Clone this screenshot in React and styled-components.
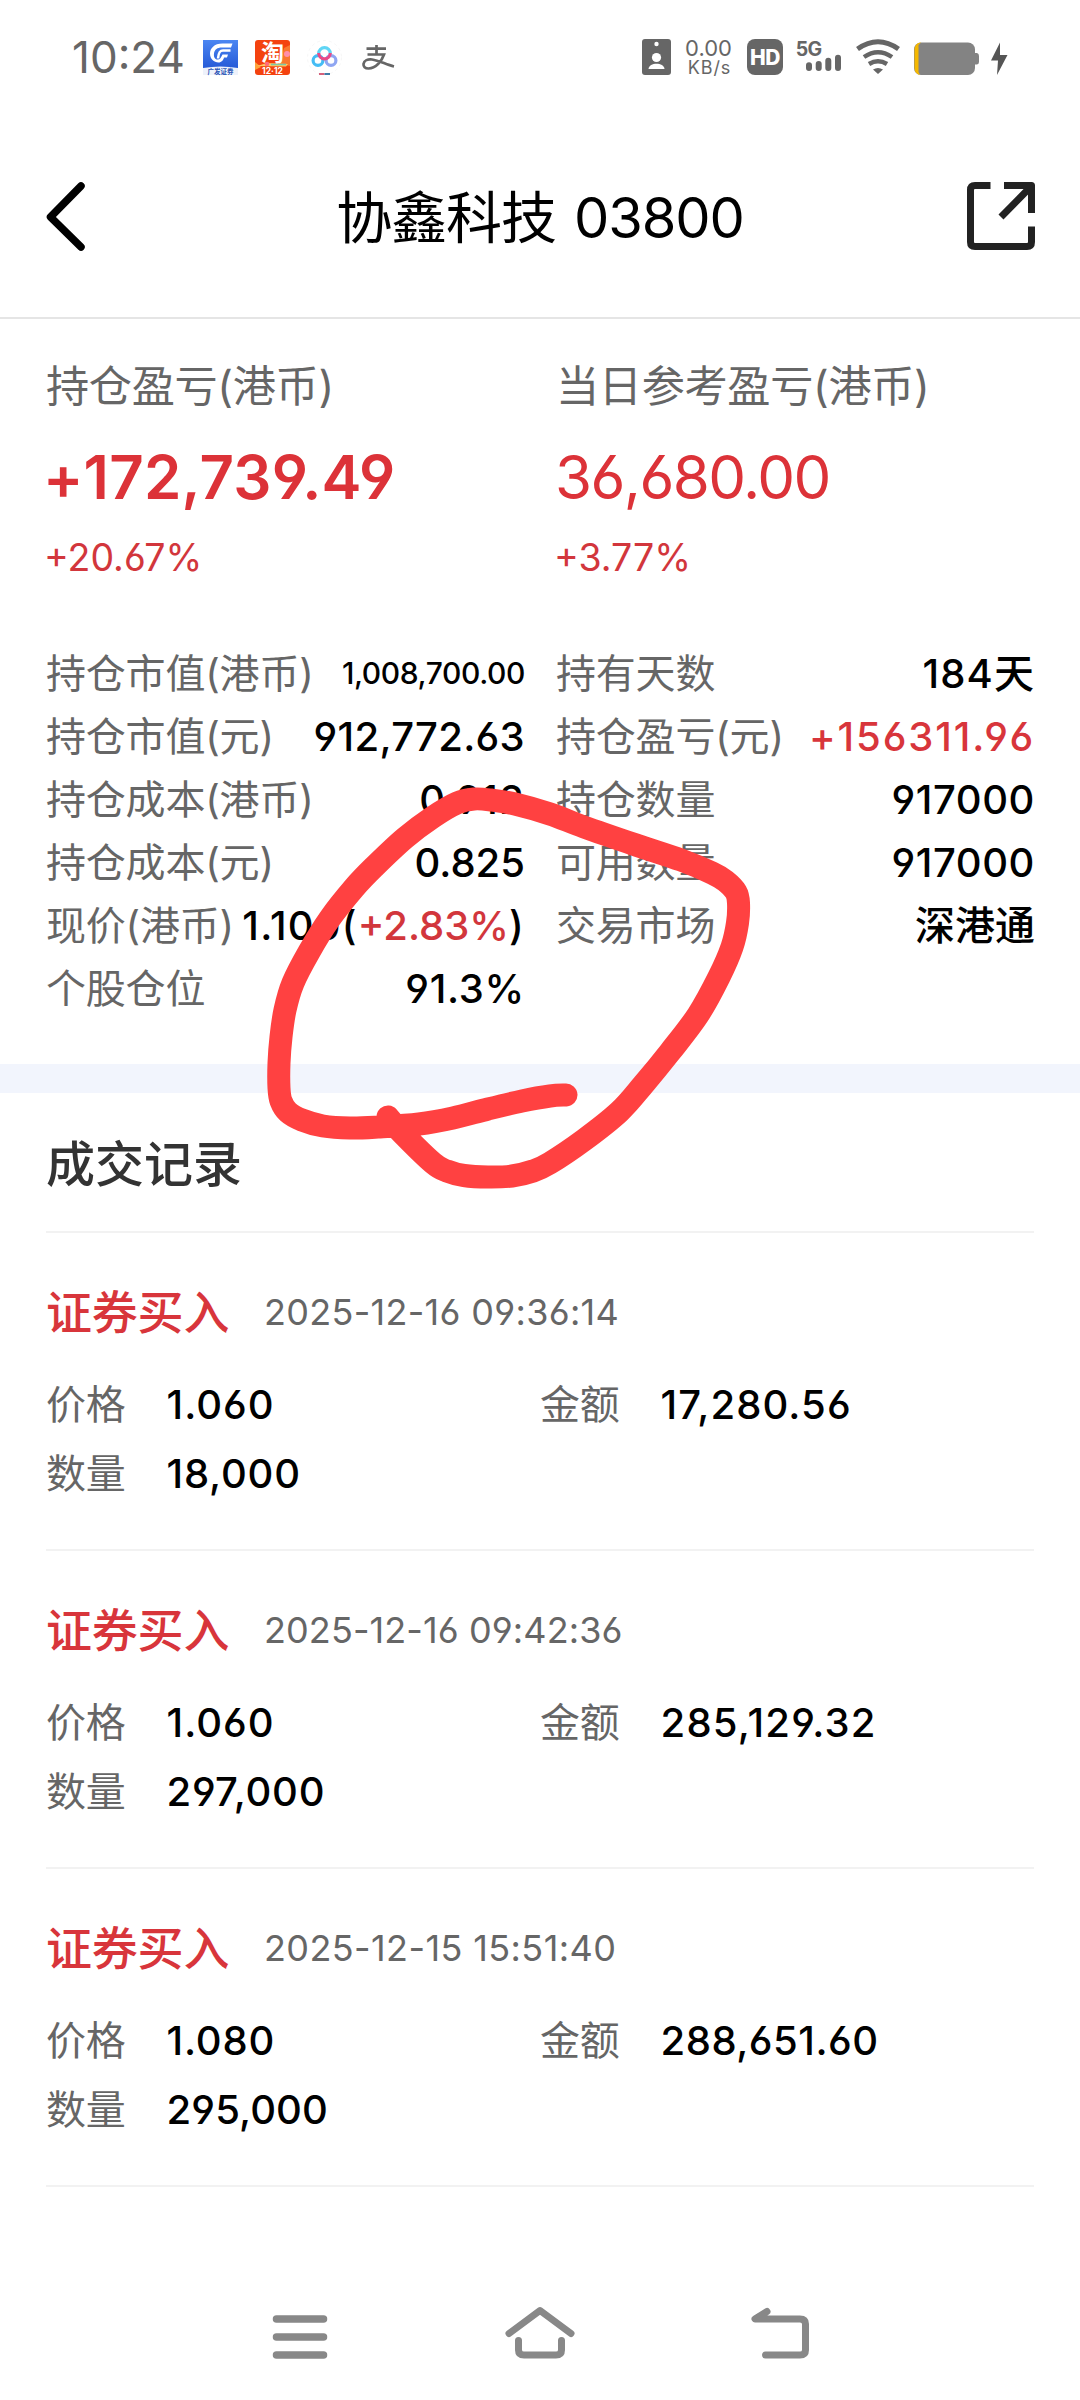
import styled, { createGlobalStyle } from "styled-components";

const holdings = [
  [
    { label: "持仓市值(港币)", value: "1,008,700.00", small: true, track: -0.4 },
    { label: "持仓市值(元)", value: "912,772.63", track: 0.3 },
    { label: "持仓成本(港币)", value: "0.912", track: 1.2 },
    { label: "持仓成本(元)", value: "0.825" },
    { label: "现价(港币)", value: "1.100", change: "+2.83%", track: 1.2 },
    { label: "个股仓位", value: "91.3%", track: 0.7 },
  ],
  [
    { label: "持有天数", value: "184天", track: 1.1 },
    { label: "持仓盈亏(元)", value: "+156311.96", up: true, track: 1.9 },
    { label: "持仓数量", value: "917000", track: 0.6 },
    { label: "可用数量", value: "917000", track: 0.6 },
    { label: "交易市场", value: "深港通" },
  ],
];

const records = [
  {
    time: { text: "2025-12-16 09:36:14", track: 0.3 },
    price: { text: "1.060", track: 1 },
    amount: { text: "17,280.56", track: 1.1 },
    count: { text: "18,000", track: 0.8 },
  },
  {
    time: { text: "2025-12-16 09:42:36", track: 0.1 },
    price: { text: "1.060", track: 1 },
    amount: { text: "285,129.32", track: 1.2 },
    count: { text: "297,000", track: 0.8 },
  },
  {
    time: { text: "2025-12-15 15:51:40", track: 0.4 },
    price: { text: "1.080", track: 0.8 },
    amount: { text: "288,651.60", track: 0.5 },
    count: { text: "295,000", track: 0.1 },
  },
];

// hand drawn marker stroke, in screen coordinates
const marker = [
  [388, 1117], [402, 1133], [433, 1163], [447, 1171], [464, 1175.5], [488, 1177],
  [512, 1176], [533, 1171], [550, 1163], [584, 1140], [619, 1112], [643, 1085],
  [670, 1052], [698, 1015], [719, 977], [732, 947], [737.5, 923], [738.5, 903],
  [736, 892], [725.5, 881], [712, 873], [681, 860], [636, 845], [584, 827],
  [550, 814], [515, 804], [491, 800], [474, 799], [457, 803], [433, 817],
  [405, 838], [374, 867], [354, 888], [329.5, 919], [309, 952], [293, 983],
  [285, 1010], [281, 1037], [279, 1063], [279, 1088], [281, 1101], [288, 1112],
  [302, 1120], [323, 1126], [350, 1128], [378, 1127], [419, 1124], [453, 1118],
  [488, 1109], [522, 1101], [550, 1096], [566, 1095],
];

const smooth = (pts) => {
  let d = `M${pts[0].join(" ")}`;
  for (let i = 0; i < pts.length - 1; i++) {
    const p0 = pts[i - 1] || pts[i];
    const p1 = pts[i];
    const p2 = pts[i + 1];
    const p3 = pts[i + 2] || p2;
    d += `C${p1[0] + (p2[0] - p0[0]) / 6} ${p1[1] + (p2[1] - p0[1]) / 6} ${
      p2[0] - (p3[0] - p1[0]) / 6
    } ${p2[1] - (p3[1] - p1[1]) / 6} ${p2[0]} ${p2[1]}`;
  }
  return d;
};

function AppIcons() {
  return (
    <AppIconRow>
      <svg width="35" height="35" viewBox="0 0 35 35">
        <defs>
          <linearGradient id="gf" x1="0" y1="0" x2="0" y2="1">
            <stop offset="0" stopColor="#4b86f2" />
            <stop offset="1" stopColor="#1c4fd0" />
          </linearGradient>
        </defs>
        <rect width="35" height="35" fill="url(#gf)" />
        <path d="M0 28Q17.500 25 35 28V35H0Z" fill="#eef2fb" />
        <path
          d="M19.500 3.500C11 3.500 7 8.500 7 13.500C7 19 11 22.500 15.500 22.500C18.500 22.500 20.500 20 21 17.500H24L25 14.500H19.500C18 17.500 17 19.500 14.500 19.500C12 19.500 10.500 17 11 13.500C11.500 9.500 14.500 7.500 18.500 7.500H28L29.500 3.500Z"
          fill="#fff"
        />
        <path d="M27.500 10.500H20C16.500 10.500 15.500 13 15 18.500" fill="none" stroke="#fff" strokeWidth="2.600" />
        <IconText x="17.500" y="33.500" size="6.500" fill="#2b55b5">广发证券</IconText>
      </svg>
      <svg width="35" height="35" viewBox="0 0 35 35">
        <rect width="35" height="35" rx="3" fill="#f4420f" />
        <path d="M35 5V26L24 24L29 8Z" fill="#f9772f" />
        <path d="M0 22L6 27L0 30Z" fill="#ffa23a" />
        <circle cx="32" cy="14" r="3" fill="#ff8fa8" />
        <path d="M2 26L12 23L33 24L31 26.500Z" fill="#ffc861" />
        <path d="M16 24.500H31" stroke="#7bc8a8" strokeWidth="1.500" />
        <circle cx="12" cy="24" r="2.300" fill="#ff6c7c" />
        <IconText x="17.500" y="21" size="23">淘</IconText>
        <IconText x="17.500" y="34" size="8.500">12·12</IconText>
      </svg>
      <svg width="35" height="35" viewBox="0 0 35 35">
        <circle cx="17.500" cy="17.500" r="17" fill="none" stroke="#f2f2f2" strokeWidth=".7" strokeDasharray="3 3" />
        <g fill="none" strokeWidth="3.200">
          <circle cx="11" cy="20.500" r="4.900" stroke="#45bdf5" />
          <circle cx="24" cy="20.500" r="4.900" stroke="#8fa6f2" />
          <path d="M11.700 13.500A5.800 5.800 0 0 1 23.300 13.500" stroke="#5fd5f5" />
          <path d="M11.700 13C12 20.700 23 20.700 23.300 13" stroke="#e94b88" />
        </g>
        <path d="M12 34H17.500" stroke="#d5607c" strokeWidth="2" />
        <path d="M17.500 34H23" stroke="#3e7da8" strokeWidth="2" />
      </svg>
      <svg width="35" height="35" viewBox="0 0 35 35">
        <path
          d="M7.500 8.700H27M17.500 5V14.500M8.500 14.500H25C23 20.500 17 28.500 9.500 28.500C6 28.500 4.300 26.500 4.500 24C5 20.500 9 19 13 19.500C20 20.500 27 24.500 35 26.500"
          fill="none"
          stroke="#666"
          strokeWidth="2.700"
        />
      </svg>
    </AppIconRow>
  );
}

function StatusBar() {
  return (
    <Status>
      <Clock>10:24</Clock>
      <AppIcons />
      <Indicators width="370" height="40" viewBox="640 37 370 40">
        <rect x="642" y="39" width="29" height="36" rx="3" fill="#666" />
        <circle cx="656.500" cy="44" r="2.200" fill="#fff" />
        <circle cx="656.500" cy="57.500" r="4.600" fill="#fff" />
        <path d="M648.500 69C649 62 664 62 664.500 69Z" fill="#fff" />
        <IconText x="708.500" y="56" size="22" weight="400" fill="#666">0.00</IconText>
        <IconText x="709.500" y="74" size="18" weight="400" fill="#666" spacing=".9px">KB/s</IconText>
        <rect x="747" y="39" width="36" height="36" rx="8" fill="#666" />
        <IconText x="765" y="65" size="21" weight="800" spacing="-.5px">HD</IconText>
        <IconText x="808.500" y="55.500" size="19.500" weight="700" fill="#666" spacing="-.8px">5G</IconText>
        <path d="M809 65.300V68M818.700 64V68M828.300 60.700V68M838 57.700V68" stroke="#666" strokeWidth="6" strokeLinecap="round" />
        <g fill="none" stroke="#666" strokeWidth="5">
          <path d="M857.500 49Q878 34.500 898.500 49" />
          <path d="M864 57Q878 47.500 892 57" strokeWidth="4.500" />
          <path d="M869 64Q878 58.500 887 64" strokeWidth="4.500" />
        </g>
        <path d="M873 69.500Q878 66.500 883 69.500L878 74Z" fill="#666" />
        <rect x="914" y="42.500" width="61" height="32.500" rx="7" fill="#838383" />
        <path d="M921 42.500H920A6 7 0 0 0 914.500 49.500V68A6 7 0 0 0 920 75L918.500 72V45Z" fill="#f5b800" />
        <path d="M975 53H977Q979 53.500 979 56V62Q979 64 977 64.500H975Z" fill="#838383" />
        <path d="M1000 42.500L991 60.500H998L997 75L1007.500 55H1000Z" fill="#555" />
      </Indicators>
    </Status>
  );
}

function Header() {
  return (
    <HeaderBar>
      <svg width="44" height="72" viewBox="44 180 44 72">
        <path d="M81 186L50.500 217L81 247" fill="none" stroke="#000" strokeWidth="7.500" strokeLinecap="round" strokeLinejoin="round" />
      </svg>
      <Title>协鑫科技 03800</Title>
      <svg width="72" height="72" viewBox="965 180 72 72">
        <path
          d="M990.500 185.500H975Q970.500 185.500 970.500 190V242Q970.500 246.500 975 246.500H1027Q1031.500 246.500 1031.500 242V226.500M1004 185.500H1031.500V213M1029.500 188L1001 217"
          fill="none"
          stroke="#222"
          strokeWidth="7"
          strokeLinejoin="round"
        />
      </svg>
    </HeaderBar>
  );
}

function App() {
  return (
    <Screen>
      <GlobalStyle />
      <StatusBar />
      <Header />
      <Summary>
        <SummaryItem>
          <SummaryLabel>持仓盈亏(港币)</SummaryLabel>
          <Profit $bold>+172,739.49</Profit>
          <Percent>+20.67%</Percent>
        </SummaryItem>
        <SummaryItem>
          <SummaryLabel>当日参考盈亏(港币)</SummaryLabel>
          <Profit>36,680.00</Profit>
          <Percent>+3.77%</Percent>
        </SummaryItem>
      </Summary>
      <Details>
        {holdings.map((column, i) => (
          <Column key={i}>
            {column.map((item) => (
              <Row key={item.label}>
                <Label>{item.label}</Label>
                <Value $small={item.small} $up={item.up} $track={item.track}>
                  {item.value}
                  {item.change && (
                    <>
                      (<Up>{item.change}</Up>)
                    </>
                  )}
                </Value>
              </Row>
            ))}
          </Column>
        ))}
      </Details>
      <Band />
      <Records>
        <SectionTitle>成交记录</SectionTitle>
        {records.map((r) => (
          <Record key={r.time.text}>
            <RecordHead>
              <Side>证券买入</Side>
              <Time $track={r.time.track}>{r.time.text}</Time>
            </RecordHead>
            <Fields>
              <Field>
                <Label>价格</Label>
                <Value $track={r.price.track}>{r.price.text}</Value>
              </Field>
              <Field>
                <Label>金额</Label>
                <Value $track={r.amount.track}>{r.amount.text}</Value>
              </Field>
              <Field>
                <Label>数量</Label>
                <Value $track={r.count.track}>{r.count.text}</Value>
              </Field>
            </Fields>
          </Record>
        ))}
      </Records>
      <NavBar>
        <svg width="54" height="60" viewBox="273 2305 54 60">
          <path d="M276.500 2319H323.500M276.500 2337H323.500M276.500 2355H323.500" stroke="#888" strokeWidth="7.500" strokeLinecap="round" />
        </svg>
        <svg width="70" height="60" viewBox="505 2305 70 60">
          <path
            d="M509 2333.500L540 2310.500L571 2333.500M518.500 2340.500V2350Q518.500 2355 524 2355H556Q561.500 2355 561.500 2350V2340.500"
            fill="none"
            stroke="#888"
            strokeWidth="7"
            strokeLinecap="round"
            strokeLinejoin="round"
          />
        </svg>
        <svg width="60" height="60" viewBox="750 2305 60 60">
          <path
            d="M767 2311.500L755 2319H800Q805.500 2319 805.500 2324V2350Q805.500 2355 800 2355H765.500"
            fill="none"
            stroke="#888"
            strokeWidth="7"
            strokeLinecap="round"
            strokeLinejoin="round"
          />
        </svg>
      </NavBar>
      <Marker width="1080" height="2400">
        <path d={smooth(marker)} />
      </Marker>
    </Screen>
  );
}

export default App;

const GlobalStyle = createGlobalStyle`
  * {
    box-sizing: border-box;
  }
  body {
    margin: 0;
    background: #fff;
  }
  svg {
    display: block;
    flex-shrink: 0;
    overflow: visible;
  }
`;

const Screen = styled.div`
  position: relative;
  display: flex;
  flex-direction: column;
  width: 1080px;
  height: 2400px;
  overflow: hidden;
  background: #fff;
  color: #000;
  font-family: Inter, "Noto Sans CJK SC", sans-serif;
  font-feature-settings: "cv03", "cv04";
  white-space: nowrap;
`;

const Status = styled.div`
  display: flex;
  align-items: center;
  height: 114px;
  padding: 0 70px 0 72px;
`;

const Clock = styled.div`
  width: 131px;
  font-size: 44px;
  line-height: 60px;
  color: #666;
`;

const AppIconRow = styled.div`
  display: flex;
  gap: 17px;
`;

const Indicators = styled.svg`
  margin-left: auto;
`;

const IconText = styled.text.attrs({ textAnchor: "middle" })`
  font-family: Inter, "Noto Sans CJK SC", sans-serif;
  font-size: ${(p) => p.size}px;
  font-weight: ${(p) => p.weight || 700};
  letter-spacing: ${(p) => p.spacing || 0};
  fill: ${(p) => p.fill || "#fff"};
`;

const HeaderBar = styled.div`
  display: flex;
  align-items: center;
  justify-content: space-between;
  height: 205px;
  padding: 0 43px 0 44px;
  border-bottom: 2px solid #e5e5e5;
`;

const Title = styled.div`
  margin-left: 27px;
  padding-top: 4px;
  font-size: 56px;
  line-height: 80px;
  letter-spacing: -1.1px;
  word-spacing: 3.5px;
`;

const Summary = styled.div`
  display: grid;
  grid-template-columns: 510px 1fr;
  padding: 37px 46px 0;
`;

const SummaryItem = styled.div`
  display: flex;
  flex-direction: column;
`;

const SummaryLabel = styled.div`
  font-size: 43.2px;
  line-height: 60px;
  letter-spacing: -0.35px;
  color: #666;
`;

const Profit = styled.div`
  margin: 21px 0 0 ${(p) => (p.$bold ? -3 : -1)}px;
  font-size: 60px;
  line-height: 80px;
  font-weight: ${(p) => (p.$bold ? 600 : 400)};
  letter-spacing: ${(p) => (p.$bold ? 0.2 : -1.6)}px;
  color: #dc3238;
`;

const Percent = styled.div`
  margin: 17px 0 0 -2px;
  font-size: 37.5px;
  line-height: 48px;
  color: #d2363c;
`;

const Details = styled.div`
  display: grid;
  grid-template-columns: 478px 478px;
  gap: 32px;
  padding: 60px 46px 44px;
`;

const Column = styled.div``;

const Row = styled.div`
  display: flex;
  align-items: center;
  justify-content: space-between;
  height: 63px;

  > :last-child {
    margin-right: -1px;
  }
`;

const Label = styled.div`
  font-size: 40px;
  line-height: 63px;
  letter-spacing: -0.2px;
  color: #666;
`;

const Value = styled.div`
  font-size: ${(p) => (p.$small ? 30 : 40)}px;
  line-height: 63px;
  font-weight: 500;
  letter-spacing: ${(p) => p.$track || 0}px;
  color: ${(p) => (p.$up ? "#d8353b" : "#000")};
`;

const Up = styled.span`
  letter-spacing: 0;
  color: #d2363c;
`;

const Band = styled.div`
  height: 29px;
  background: #f2f5fd;
`;

const Records = styled.div`
  padding: 0 46px;
`;

const SectionTitle = styled.div`
  height: 140px;
  border-bottom: 2px solid #f2f2f2;
  font-size: 49px;
  line-height: 144px;
  font-weight: 500;
  color: #333;
`;

const Record = styled.div`
  height: 318px;
  padding-top: 48px;
  border-bottom: 2px solid #f2f2f2;
`;

const RecordHead = styled.div`
  display: flex;
  align-items: center;
  height: 62px;
`;

const Side = styled.div`
  width: 218px;
  font-size: 46px;
  line-height: 62px;
  letter-spacing: -0.2px;
  font-weight: 500;
  color: #d8353b;
`;

const Time = styled.div`
  font-size: 36px;
  line-height: 62px;
  letter-spacing: ${(p) => p.$track}px;
  color: #666;
`;

const Fields = styled.div`
  display: grid;
  grid-template-columns: 494px 1fr;
  row-gap: 6px;
  padding-top: 30px;
`;

const Field = styled.div`
  display: flex;
  gap: 41px;
`;

const NavBar = styled.div`
  display: flex;
  gap: 177px;
  padding: 118px 0 0 273px;

  svg:nth-child(2) {
    margin: 0 -2px 0 1px;
  }
`;

const Marker = styled.svg`
  position: absolute;
  top: 0;
  left: 0;
  pointer-events: none;

  path {
    fill: none;
    stroke: #ff4141;
    stroke-width: 23;
    stroke-linecap: round;
    stroke-linejoin: round;
  }
`;
